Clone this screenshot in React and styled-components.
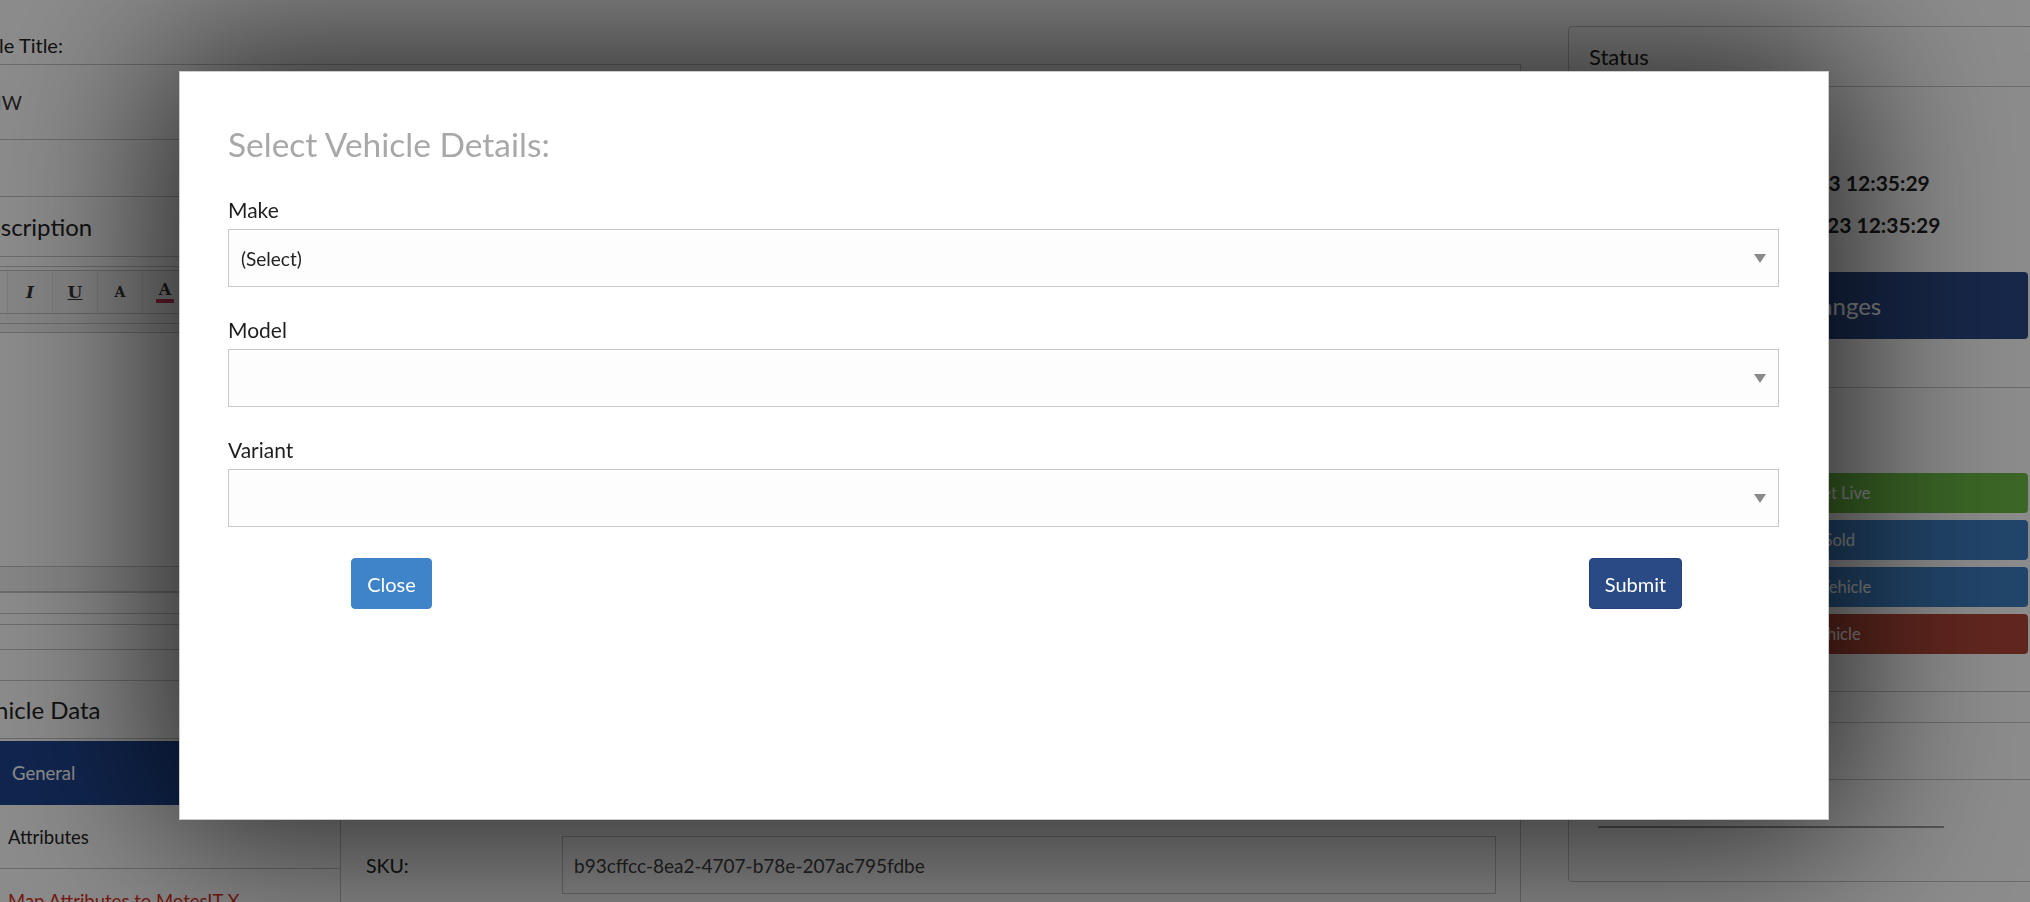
import React from 'react'
import styled, { createGlobalStyle } from 'styled-components'

const GlobalStyle = createGlobalStyle`
  *, *::before, *::after {
    box-sizing: border-box;
  }
  html, body {
    margin: 0;
    padding: 0;
    background: #ffffff;
    overflow: hidden;
  }
  body {
    font-family: Lato, "Open Sans", "Liberation Sans", sans-serif;
    color: #333333;
  }
`

const LINE = '#c4c4c4'

/* ---------- page behind the modal ---------- */

const Page = styled.div`
  display: flex;
  align-items: flex-start;
  width: 2030px;
  height: 902px;
  overflow: hidden;
`
const MainCol = styled.div`
  flex: 0 0 1573px;
  margin-left: -52px;
  padding-top: 32px;
`
const FieldLabel = styled.div`
  padding-left: 3px;
  font-size: 20px;
  line-height: 26px;
  margin-bottom: 6px;
  color: #222;
`
const TextBox = styled.div`
  display: flex;
  align-items: center;
  height: ${p => p.$h}px;
  padding-left: ${p => p.$pad || 12}px;
  border: 1px solid ${LINE};
  border-top-width: ${p => (p.$noTop ? 0 : 1)}px;
  font-size: 19.5px;
  color: #333;
  background: #fff;
`
const SectionHeading = styled.div`
  display: flex;
  align-items: center;
  height: ${p => p.$h}px;
  padding-left: ${p => p.$indent || 22}px;
  font-size: 24px;
  color: #222;
  border-bottom: 1px solid ${LINE};
  border-top: ${p => (p.$top ? `1px solid ${LINE}` : 'none')};
`
const Editor = styled.div`
  margin-top: 9px;
  border: 1px solid ${LINE};
  padding-top: 3px;
`
const Toolbar = styled.div`
  display: flex;
  height: 44px;
  padding-left: 14px;
  border-top: 1px solid ${LINE};
  border-bottom: 1px solid ${LINE};
  background: #f4f4f4;
`
const ToolBtn = styled.div`
  display: flex;
  align-items: center;
  justify-content: center;
  width: 45px;
  border-right: 1px solid #e2e2e2;
  font-family: "DejaVu Serif", "Liberation Serif", serif;
  font-weight: bold;
  font-size: ${p => p.$size || 17}px;
  font-style: ${p => (p.$italic ? 'italic' : 'normal')};
  text-decoration: ${p => (p.$under ? 'underline' : 'none')};
  color: #333;
`
const ColorA = styled.span`
  padding: 0 3px 1px;
  border-bottom: 4px solid #c43a56;
  line-height: 1;
`
const Strip = styled.div`
  height: ${p => p.$h}px;
  border-bottom: 1px solid ${LINE};
  background: ${p => p.$bg || '#fff'};
`
const LineRow = styled.div`
  height: ${p => p.$h}px;
  border-top: 1px solid ${LINE};
`
const VehicleBody = styled.div`
  display: flex;
`
const Nav = styled.div`
  flex: 0 0 392px;
  padding-top: 2px;
`
const NavItem = styled.div`
  display: flex;
  align-items: center;
  height: 64px;
  padding-left: ${p => (p.$active ? 64 : 60)}px;
  font-size: 18.5px;
  color: ${p => (p.$active ? '#ffffff' : p.$red ? '#d9301c' : '#222')};
  background: ${p => (p.$active ? '#1f4590' : 'transparent')};
  border-bottom: 1px solid ${p => (p.$active ? '#1f4590' : LINE)};
`
const DataContent = styled.div`
  flex: 1;
  padding: 15px 24px 0 25px;
  height: 200px;
  border-left: 1px solid ${LINE};
  border-right: 1px solid ${LINE};
`
const DataRow = styled.div`
  display: flex;
  align-items: center;
  margin-bottom: 24px;
`
const DataLabel = styled.div`
  flex: 0 0 196px;
  font-size: 19.5px;
  color: #222;
`
const DataInput = styled.div`
  flex: 1;
  display: flex;
  align-items: center;
  height: 58px;
  padding-left: 11px;
  border: 1px solid ${LINE};
  font-size: 19px;
  color: #444;
`

/* ---------- status column ---------- */

const StatusCol = styled.div`
  flex: 0 0 481px;
  margin-left: 47px;
  padding-top: 26px;
`
const Card = styled.div`
  height: 856px;
  border: 1px solid ${LINE};
  border-radius: 4px;
`
const CardHeader = styled.div`
  display: flex;
  align-items: center;
  height: 60px;
  padding-left: 20px;
  font-size: 22px;
  color: #222;
  border-bottom: 1px solid ${LINE};
`
const CardBody = styled.div`
  padding: 33px 20px 0;
`
const InfoRow = styled.div`
  font-size: 21px;
  line-height: 42px;
  font-weight: bold;
  color: #222;
  white-space: nowrap;
`
const BigButton = styled.div`
  display: flex;
  align-items: center;
  justify-content: center;
  height: 67px;
  margin-top: 26px;
  border-radius: 4px;
  background: #2b4884;
  color: #fff;
  font-size: 24px;
`
const Divider = styled.div`
  margin: ${p => p.$top}px -20px 0;
  border-top: 1px solid ${LINE};
  height: ${p => p.$h || 0}px;
`
const Actions = styled.div`
  display: flex;
  flex-direction: column;
  gap: 7px;
  margin-top: 85px;
`
const ActionButton = styled.div`
  display: flex;
  align-items: center;
  justify-content: center;
  height: 40px;
  border-radius: 4px;
  background: ${p => p.$bg};
  color: #fff;
  font-size: 16.5px;
`
const Rule = styled.div`
  width: 346px;
  height: 2px;
  margin: 46px 0 0 9px;
  background: #9b9b9b;
`

/* ---------- overlay + modal ---------- */

const Backdrop = styled.div`
  position: fixed;
  inset: 0;
  background: rgba(0, 0, 0, 0.45);
`
const Modal = styled.div`
  position: fixed;
  left: 179px;
  top: 71px;
  width: 1650px;
  height: 749px;
  padding: 52px 49px 0 48px;
  background: #ffffff;
  border: 1px solid rgba(0, 0, 0, 0.2);
  box-shadow: 0 0 160px 20px rgba(0, 0, 0, 0.75);
`
const ModalTitle = styled.h4`
  margin: 0 0 34px;
  font-size: 33.5px;
  line-height: 1.2;
  font-weight: 400;
  color: #a8a8a8;
`
const FormGroup = styled.div`
  margin-bottom: 31px;
`
const Label = styled.label`
  display: block;
  font-size: 21px;
  line-height: 24px;
  margin-bottom: 7px;
  color: #1e1e1e;
`
const SelectWrap = styled.div`
  position: relative;

  &::after {
    content: '';
    position: absolute;
    right: 13px;
    top: 50%;
    margin-top: -4px;
    border-left: 6px solid transparent;
    border-right: 6px solid transparent;
    border-top: 9px solid #8a8a8a;
    pointer-events: none;
  }
`
const Select = styled.select`
  display: block;
  width: 100%;
  height: 58px;
  padding: 0 40px 0 12px;
  border: 1px solid #c8c8c8;
  border-radius: 0;
  background: #fdfdfd;
  font-family: Lato, "Open Sans", sans-serif;
  font-size: 19px;
  color: #222;
  appearance: none;
  -webkit-appearance: none;
  outline: none;
`
const ButtonRow = styled.div`
  display: flex;
  justify-content: space-between;
  padding: 0 97px 0 123px;
`
const Button = styled.button`
  width: ${p => p.$w}px;
  height: 51px;
  padding: 0;
  border: 1px solid ${p => p.$border};
  border-radius: 4px;
  background: ${p => p.$bg};
  color: #fff;
  font-family: Lato, "Open Sans", sans-serif;
  font-size: 20px;
  cursor: pointer;
`

const SelectField = ({ label, value }) => (
  <FormGroup>
    <Label>{label}</Label>
    <SelectWrap>
      <Select defaultValue={value}>
        <option value={value}>{value}</option>
      </Select>
    </SelectWrap>
  </FormGroup>
)

const Background = () => (
  <Page>
    <MainCol>
      <FieldLabel>Vehicle Title:</FieldLabel>
      <TextBox $h={76} $pad={22}>BMW</TextBox>
      <TextBox $h={57} $noTop />
      <SectionHeading $h={60}>Description</SectionHeading>
      <Editor>
        <Toolbar>
          <ToolBtn>B</ToolBtn>
          <ToolBtn $italic>I</ToolBtn>
          <ToolBtn $under>U</ToolBtn>
          <ToolBtn $size={14}>A</ToolBtn>
          <ToolBtn $size={16}><ColorA>A</ColorA></ToolBtn>
          <ToolBtn $size={15}>¶</ToolBtn>
        </Toolbar>
        <Strip $h={10} $bg='#f4f4f4' />
        <Strip $h={9} $bg='#f4f4f4' />
        <Strip $h={234} />
        <Strip $h={25} $bg='#f4f4f4' />
      </Editor>
      <div style={{ height: 20 }} />
      <LineRow $h={11} />
      <LineRow $h={25} />
      <LineRow $h={31} />
      <SectionHeading $h={59} $top $indent={20}>Vehicle Data</SectionHeading>
      <VehicleBody>
        <Nav>
          <NavItem $active>General</NavItem>
          <NavItem>Attributes</NavItem>
          <NavItem $red>Map Attributes to MotesIT X</NavItem>
        </Nav>
        <DataContent>
          <DataRow>
            <DataLabel>Stock No:</DataLabel>
            <DataInput>BMW-0001</DataInput>
          </DataRow>
          <DataRow>
            <DataLabel>SKU:</DataLabel>
            <DataInput>b93cffcc-8ea2-4707-b78e-207ac795fdbe</DataInput>
          </DataRow>
        </DataContent>
      </VehicleBody>
    </MainCol>

    <StatusCol>
      <Card>
        <CardHeader>Status</CardHeader>
        <CardBody>
          <InfoRow>Status: Draft</InfoRow>
          <InfoRow>Date Created: 23/06/2023 12:35:29</InfoRow>
          <InfoRow>Date Modified: 23/06/2023 12:35:29</InfoRow>
          <BigButton>Save Changes</BigButton>
          <Divider $top={48} />
          <Actions>
            <ActionButton $bg='#6cbb46'>Vehicle - Set Live</ActionButton>
            <ActionButton $bg='#3e7fc3'>Mark as Sold</ActionButton>
            <ActionButton $bg='#3e7fc3'>Duplicate Vehicle</ActionButton>
            <ActionButton $bg='#b14738'>Delete Vehicle</ActionButton>
          </Actions>
          <Divider $top={37} $h={31} />
          <Divider $top={0} $h={57} />
          <Divider $top={0} />
          <Rule />
        </CardBody>
      </Card>
    </StatusCol>
  </Page>
)

const App = () => (
  <>
    <GlobalStyle />
    <Background />
    <Backdrop />
    <Modal role='dialog'>
      <ModalTitle>Select Vehicle Details:</ModalTitle>
      <SelectField label='Make' value='(Select)' />
      <SelectField label='Model' value='' />
      <SelectField label='Variant' value='' />
      <ButtonRow>
        <Button $w={81} $bg='#3f83c8' $border='#3f83c8'>Close</Button>
        <Button $w={93} $bg='#2a4a85' $border='#23407a'>Submit</Button>
      </ButtonRow>
    </Modal>
  </>
)

export default App
